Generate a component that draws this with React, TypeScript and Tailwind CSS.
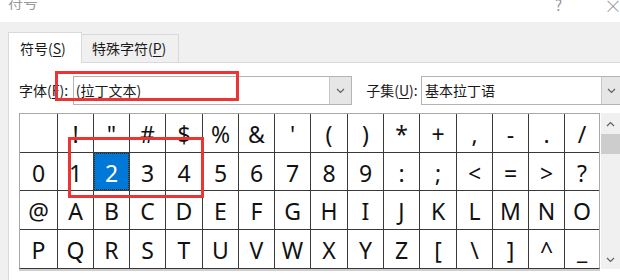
import React from "react";

const rows: string[][] = [
  [" ", "!", "\"", "#", "$", "%", "&", "'", "(", ")", "*", "+", ",", "-", ".", "/"],
  ["0", "1", "2", "3", "4", "5", "6", "7", "8", "9", ":", ";", "<", "=", ">", "?"],
  ["@", "A", "B", "C", "D", "E", "F", "G", "H", "I", "J", "K", "L", "M", "N", "O"],
  ["P", "Q", "R", "S", "T", "U", "V", "W", "X", "Y", "Z", "[", "\\", "]", "^", "_"],
];

const uiFont = "font-['Noto_Sans_CJK_SC','Noto_Sans',sans-serif]";

function Chevron({ up = false }: { up?: boolean }) {
  return (
    <svg width="9" height="6" viewBox="0 0 9 6" className={up ? "rotate-180" : ""}>
      <path d="M1 1 L4.5 4.5 L8 1" fill="none" stroke="#606060" strokeWidth="1.2" />
    </svg>
  );
}

function DropButton() {
  return (
    <div className="flex h-full w-[22px] items-center justify-center border-l border-[#c8c8c8] bg-[#e6e6e6]">
      <Chevron />
    </div>
  );
}

export default function App() {
  return (
    <div className={`relative flex h-[280px] w-[620px] flex-col overflow-hidden bg-white ${uiFont} text-[14px] text-[#1a1a1a]`}>
      {/* title bar */}
      <div className="flex h-[22px] shrink-0 items-start bg-white">
        <span className="ml-[8px] -mt-[9px] text-[15px] text-[#9a9a9a]">符号</span>
        <span className="ml-auto -mt-[6px] mr-[42px] text-[15px] text-[#9a9a9a]">?</span>
        <span className="-mt-[8px] mr-[-2px] text-[18px] font-light text-[#9a9a9a]">×</span>
      </div>

      <div className="flex flex-1 flex-col bg-[#f0f0f0] pl-[8px]">
        {/* tabs */}
        <div className="flex h-[40px] shrink-0 items-end">
          <div className="relative z-10 -mb-px flex h-[31px] w-[74px] items-center border border-b-0 border-[#d9d9d9] bg-white pl-[11px]">
            符号(<span className="underline underline-offset-2">S</span>)
          </div>
          <div className="flex h-[28px] w-[97px] items-center border border-l-0 border-b-0 border-[#d9d9d9] bg-[#f0f0f0] pl-[10px]">
            特殊字符(<span className="underline underline-offset-2">P</span>)
          </div>
        </div>

        {/* panel */}
        <div className="flex-1 border-l border-t border-[#d9d9d9] bg-white pl-[10px] pt-[13px]">
          <div className="flex h-[29px] items-center">
            <span className="w-[54px]">
              字体(<span className="underline underline-offset-2">F</span>):
            </span>
            <div className="flex h-[29px] w-[280px] items-center border border-[#b4b4b4] bg-white">
              <span className="flex-1 pl-[2px]">(拉丁文本)</span>
              <DropButton />
            </div>
            <span className="ml-[14px] w-[55px]">
              子集(<span className="underline underline-offset-2">U</span>):
            </span>
            <div className="flex h-[29px] w-[199px] shrink-0 items-center border border-r-0 border-[#b4b4b4] bg-white">
              <span className="flex-1 pl-[3px]">基本拉丁语</span>
              <div className="flex h-full w-[19px] items-center justify-center border-l border-[#c8c8c8] bg-[#e6e6e6]">
                <Chevron />
              </div>
            </div>
          </div>

          <div className="mt-[8px] flex">
            <div className="border border-[#a8a8a8] border-b-[#3a3a3a] shadow-[0_2px_0_#cfcfcf]">
              <div className="grid grid-cols-[37px_35px_35px_35px_36px_35px_35px_35px_36px_35px_35px_36px_35px_35px_35px_34px] grid-rows-[38px_37px_38px_38px] gap-px bg-[#3a3a3a] font-['Noto_Sans',sans-serif] text-[23px] leading-none text-[#111]">
                {rows.map((row, r) =>
                  row.map((ch, c) => {
                    const sel = r === 1 && c === 2;
                    return (
                      <div
                        key={`${r}-${c}`}
                        className={
                          sel
                            ? "flex items-center justify-center bg-[#0078d7] pt-[3px] text-white outline-1 -outline-offset-1 outline-dotted outline-[#3a2a1a]"
                            : "flex items-center justify-center bg-white pt-[3px]"
                        }
                      >
                        {ch}
                      </div>
                    );
                  })
                )}
              </div>
            </div>
            <div className="ml-px flex h-[156px] w-[19px] flex-col items-center bg-[#f0f0f0]">
              <div className="flex h-[21px] items-center">
                <Chevron up />
              </div>
              <div className="h-[20px] w-full bg-[#cdcdcd]" />
              <div className="flex-1" />
              <div className="flex h-[19px] items-center">
                <Chevron />
              </div>
            </div>
          </div>
        </div>
      </div>

      {/* annotations */}
      <div className="absolute left-[55px] top-[71px] h-[30px] w-[184px] border-[3px] border-[#ec3434]" />
      <div className="absolute left-[68px] top-[137px] h-[61px] w-[136px] border-[3px] border-[#ec3434]" />
    </div>
  );
}
